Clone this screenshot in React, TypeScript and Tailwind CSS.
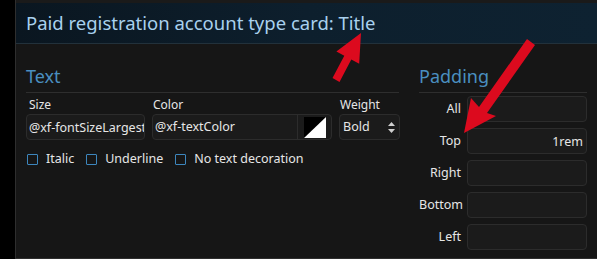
import React from "react";

const font = { fontFamily: '"Noto Sans", "Open Sans", sans-serif' };

function PadRow({ label, value }: { label: string; value?: string }) {
  return (
    <div className="flex items-center h-[26px]">
      <div className="w-[48px] text-right text-[12.5px] text-[#e6e6e6] pr-[6px] whitespace-nowrap">{label}</div>
      <input
        readOnly
        value={value ?? ""}
        className="w-[120px] h-[26px] rounded-[4px] border border-[#2c2c2c] bg-[#1b1b1b] text-right pr-[3px] text-[12.5px] text-[#e6e6e6] outline-none"
        style={font}
      />
    </div>
  );
}

function Check({ label }: { label: string }) {
  return (
    <div className="flex items-center">
      <div className="w-[11px] h-[11px] border border-[#3d86bd] rounded-[1px]" />
      <span className="ml-[8px] text-[12.5px] text-[#e6e6e6]">{label}</span>
    </div>
  );
}

export default function App() {
  return (
    <div className="relative w-[597px] h-[259px] bg-black flex overflow-hidden" style={font}>
      <div className="w-[15px] shrink-0 bg-black" />
      <div className="flex-1 flex flex-col border-l border-b border-[#2e2e2e] bg-[#161616]">
        <div className="h-[3px] bg-[#1a1a1a]" />
        <div className="h-[41px] border-b border-[#22313b] bg-gradient-to-r from-[#0a1620] via-[#0d1f2d] to-[#0e2231] flex items-center pl-[10px]">
          <span className="text-[18.5px] text-[#a9d1ee] leading-none">Paid registration account type card: Title</span>
        </div>
        <div className="flex pl-[10px] pt-[20px]">
          <div className="w-[373px]">
            <div className="text-[18px] leading-[24px] text-[#4a8fc0] pb-[4px] border-b border-[#2e2e2e]">Text</div>
            <div className="flex mt-[4px] gap-[7px]">
              <div className="flex flex-col">
                <div className="text-[12px] text-[#e6e6e6] pl-[3px] leading-[16px]">Size</div>
                <input
                  readOnly
                  value="@xf-fontSizeLargest"
                  className="w-[119px] h-[26px] mt-[1px] rounded-[4px] border border-[#2c2c2c] bg-[#1b1b1b] pl-[2px] text-[12.5px] text-[#e6e6e6] outline-none"
                  style={font}
                />
              </div>
              <div className="flex flex-col">
                <div className="text-[12px] text-[#e6e6e6] pl-[1px] leading-[16px]">Color</div>
                <div className="w-[180px] h-[26px] mt-[1px] rounded-[4px] border border-[#2c2c2c] bg-[#1b1b1b] flex items-center text-[12.5px] text-[#e6e6e6]">
                  <span className="flex-1 pl-[2px]">@xf-textColor</span>
                  <div className="w-[34px] h-full border-l border-[#2c2c2c] flex items-center justify-center">
                    <svg width="22" height="21" viewBox="0 0 22 21">
                      <rect x="0" y="0" width="22" height="21" fill="#000" />
                      <polygon points="22,0 22,21 0,21" fill="#fff" />
                    </svg>
                  </div>
                </div>
              </div>
              <div className="flex flex-col">
                <div className="text-[12px] text-[#e6e6e6] pl-[1px] leading-[16px]">Weight</div>
                <div className="w-[61px] h-[26px] mt-[1px] rounded-[4px] border border-[#2c2c2c] bg-[#1b1b1b] flex items-center justify-between pl-[3px] pr-[4px] text-[12.5px] text-[#e6e6e6]">
                  <span>Bold</span>
                  <svg width="7" height="11" viewBox="0 0 7 11">
                    <polygon points="3.5,0 7,4 0,4" fill="#cfcfcf" />
                    <polygon points="0,7 7,7 3.5,11" fill="#cfcfcf" />
                  </svg>
                </div>
              </div>
            </div>
            <div className="flex gap-[12px] mt-[10px] pl-[1px]">
              <Check label="Italic" />
              <Check label="Underline" />
              <Check label="No text decoration" />
            </div>
          </div>
          <div className="ml-[20px] w-[168px]">
            <div className="text-[18px] leading-[24px] text-[#4a8fc0] pb-[4px] border-b border-[#2e2e2e]">Padding</div>
            <div className="flex flex-col gap-[6px] mt-[3px]">
              <PadRow label="All" />
              <PadRow label="Top" value="1rem" />
              <PadRow label="Right" />
              <PadRow label="Bottom" />
              <PadRow label="Left" />
            </div>
          </div>
        </div>
      </div>
      <svg className="absolute inset-0 pointer-events-none" width="597" height="259" viewBox="0 0 597 259">
        <polygon
          points="361,33 359.2,63.7 351.3,59.5 339.5,81.9 332.5,78.1 344.3,55.7 336.4,51.5"
          fill="#dc0a1e"
        />
        <polygon
          points="464,133 496,116 487,113 535,45 527,39 479,107 471,98"
          fill="#dc0a1e"
        />
      </svg>
    </div>
  );
}
